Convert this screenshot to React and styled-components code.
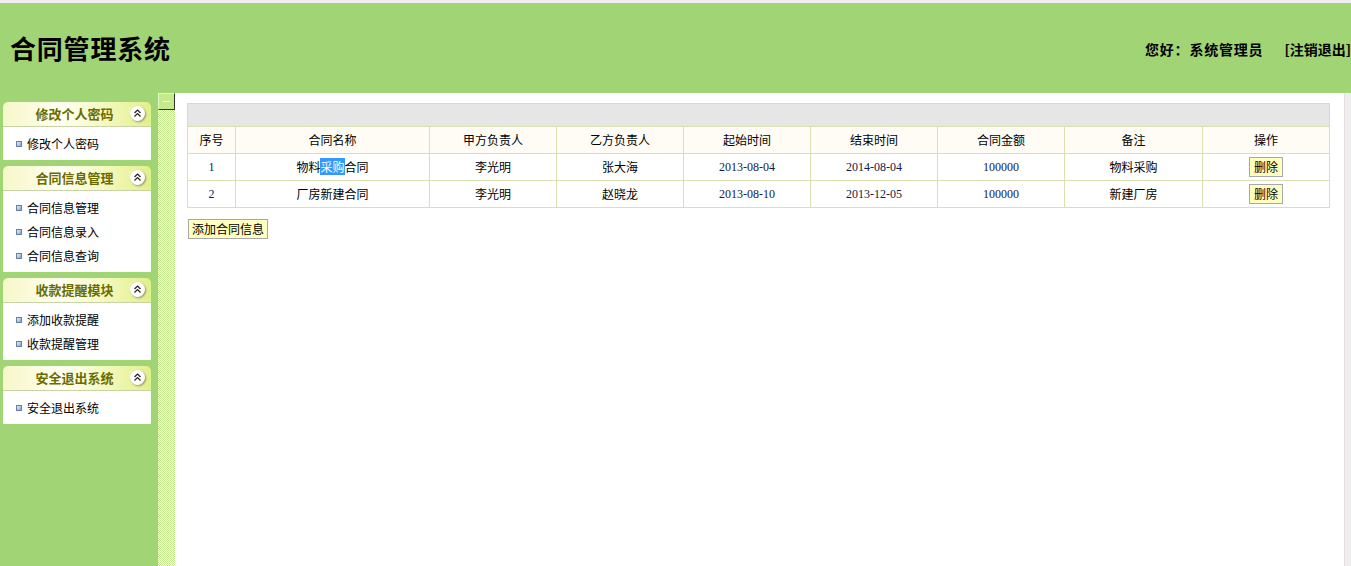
import React from 'react';
import styled, { createGlobalStyle } from 'styled-components';

const Global = createGlobalStyle`
  html, body { margin: 0; padding: 0; height: 566px; overflow: hidden; background: #fff; }
  body { font-family: "Noto Sans CJK SC", "Noto Sans", sans-serif; font-size: 12px; color: #000; }
  #root { height: 100%; }
  * { box-sizing: border-box; }
`;

const Page = styled.div`
  height: 566px;
  display: flex;
  flex-direction: column;
  border-top: 3px solid #eeeeee;
`;

const Header = styled.header`
  height: 90px;
  flex-shrink: 0;
  background: #a0d475;
  display: flex;
  align-items: center;
  justify-content: space-between;
  padding-left: 10px;
`;

const Title = styled.h1`
  margin: 0;
  font-size: 26px;
  line-height: 30px;
  font-weight: bold;
  letter-spacing: 0.8px;
  color: #000;
`;

const UserBar = styled.div`
  display: flex;
  align-items: center;
  gap: 21px;
  font-size: 14px;
  font-weight: bold;
  letter-spacing: 0.8px;
  line-height: 18px;
  padding-top: 2px;
`;

const Logout = styled.span`
  letter-spacing: 0;
  white-space: nowrap;
`;

const Body = styled.div`
  flex: 1;
  display: flex;
  min-height: 0;
`;

const Sidebar = styled.nav`
  width: 158px;
  flex-shrink: 0;
  background: #a0d475;
  padding: 9px 7px 0 3px;
`;

const Panel = styled.section`
  width: 148px;
  margin-bottom: 6px;
`;

const PanelHead = styled.div`
  position: relative;
  height: 25px;
  border-bottom: 1px solid #c9d3a8;
  border-radius: 5px 5px 0 0;
  background: linear-gradient(90deg, #f6f7c8 0%, #fffff2 40%, #f3f8bd 70%, #e2f08a 100%);
  display: flex;
  align-items: center;
  justify-content: center;
  font-size: 13px;
  font-weight: bold;
  color: #6b6c00;
  line-height: 16px;
  padding-right: 5px;
`;

const Toggle = styled.span`
  position: absolute;
  right: 6px;
  top: 4px;
  width: 15px;
  height: 15px;
  border-radius: 50%;
  background: #fff;
  box-shadow: 1px 1px 2px rgba(90, 90, 60, 0.6);
  display: flex;
  align-items: center;
  justify-content: center;
`;

const PanelBody = styled.ul`
  list-style: none;
  margin: 0;
  padding: 5px 0 4px;
  background: #fff;
`;

const Item = styled.li`
  height: 24px;
  display: flex;
  align-items: center;
  gap: 5px;
  padding-left: 13px;
  font-size: 12px;
  line-height: 14px;
  color: #000;
`;

const Bullet = styled.i`
  width: 6px;
  height: 6px;
  border: 1px solid #6c7f9a;
  background: linear-gradient(135deg, #e6f0ff, #7fa6dc);
`;

const Splitter = styled.div`
  width: 17px;
  flex-shrink: 0;
  background-color: #ffffff;
  background-image: conic-gradient(#c3ec8c 25%, #ffffff 0 50%, #c3ec8c 0 75%, #ffffff 0);
  background-size: 2px 2px;
`;

const SplitButton = styled.div`
  height: 17px;
  background: #c4ea8a;
  border-top: 1px solid #e6f8c8;
  border-left: 1px solid #e6f8c8;
  border-right: 1px solid #333;
  border-bottom: 1px solid #333;
  display: flex;
  align-items: center;
  justify-content: center;
  &::after {
    content: "";
    width: 7px;
    height: 1px;
    background: #f4fbe8;
  }
`;

const Main = styled.main`
  flex: 1;
  background: #fff;
  padding: 10px 14px 0 12px;
`;

const Scroll = styled.div`
  width: 7px;
  flex-shrink: 0;
  background: #eeeeee;
  border-left: 1px solid #e9dede;
`;

const Table = styled.table`
  width: 1142px;
  border-collapse: collapse;
  table-layout: fixed;
  font-size: 12px;
`;

const Cell = styled.td`
  border: 1px solid #d9e0b2;
  height: 27px;
  padding: 0;
  text-align: center;
  vertical-align: middle;
  line-height: 14px;
  font-family: ${p => (p.$serif ? '"Liberation Serif", "Noto Sans CJK SC", serif' : '"Noto Sans CJK SC", sans-serif')};
  color: ${p => (p.$serif ? '#14204a' : '#000')};
`;

const HeadCell = styled.th`
  border: 1px solid #d9e0b2;
  height: 27px;
  padding: 0;
  font-weight: normal;
  background: #fffcf5;
  line-height: 14px;
`;

const Bar = styled.td`
  border: 1px solid #d9e0b2;
  height: 23px;
  padding: 0;
  background: #e6e6e6;
`;

const Btn = styled.button`
  font-family: "Noto Sans CJK SC", sans-serif;
  font-size: 12px;
  line-height: 14px;
  height: 20px;
  width: ${p => p.$w}px;
  padding: 0;
  background: #ffffbf;
  border: 1px solid #a8a8a8;
  color: #000;
  cursor: pointer;
`;

const AddBtn = styled(Btn)`
  display: block;
  margin: 11px 0 0 1px;
`;

const Sel = styled.span`
  background: #3399ff;
  color: #fff;
`;

const menu = [
  { title: '修改个人密码', items: ['修改个人密码'] },
  { title: '合同信息管理', items: ['合同信息管理', '合同信息录入', '合同信息查询'] },
  { title: '收款提醒模块', items: ['添加收款提醒', '收款提醒管理'] },
  { title: '安全退出系统', items: ['安全退出系统'] },
];

const cols = [48, 194, 127, 127, 127, 127, 127, 138, 127];
const heads = ['序号', '合同名称', '甲方负责人', '乙方负责人', '起始时间', '结束时间', '合同金额', '备注', '操作'];

const rows = [
  { id: 1, name: <>物料<Sel>采购</Sel>合同</>, a: '李光明', b: '张大海', s: '2013-08-04', e: '2014-08-04', m: '100000', note: '物料采购' },
  { id: 2, name: '厂房新建合同', a: '李光明', b: '赵晓龙', s: '2013-08-10', e: '2013-12-05', m: '100000', note: '新建厂房' },
];

const Chevrons = () => (
  <svg width="9" height="9" viewBox="0 0 9 9">
    <path d="M1.5 4 L4.5 1 L7.5 4 M1.5 7.5 L4.5 4.5 L7.5 7.5" fill="none" stroke="#222" strokeWidth="1.2" />
  </svg>
);

export default function App() {
  return (
    <>
      <Global />
      <Page>
        <Header>
          <Title>合同管理系统</Title>
          <UserBar>
            <span>您好：系统管理员</span>
            <Logout>[注销退出]</Logout>
          </UserBar>
        </Header>
        <Body>
          <Sidebar>
            {menu.map(g => (
              <Panel key={g.title}>
                <PanelHead>
                  {g.title}
                  <Toggle><Chevrons /></Toggle>
                </PanelHead>
                <PanelBody>
                  {g.items.map(it => (
                    <Item key={it}><Bullet />{it}</Item>
                  ))}
                </PanelBody>
              </Panel>
            ))}
          </Sidebar>
          <Splitter><SplitButton /></Splitter>
          <Main>
            <Table>
              <colgroup>
                {cols.map((w, i) => <col key={i} style={{ width: w }} />)}
              </colgroup>
              <tbody>
                <tr><Bar colSpan={9} /></tr>
                <tr>{heads.map(h => <HeadCell key={h}>{h}</HeadCell>)}</tr>
                {rows.map(r => (
                  <tr key={r.id}>
                    <Cell $serif>{r.id}</Cell>
                    <Cell>{r.name}</Cell>
                    <Cell>{r.a}</Cell>
                    <Cell>{r.b}</Cell>
                    <Cell $serif>{r.s}</Cell>
                    <Cell $serif>{r.e}</Cell>
                    <Cell $serif>{r.m}</Cell>
                    <Cell>{r.note}</Cell>
                    <Cell><Btn $w={34}>删除</Btn></Cell>
                  </tr>
                ))}
              </tbody>
            </Table>
            <AddBtn $w={80}>添加合同信息</AddBtn>
          </Main>
          <Scroll />
        </Body>
      </Page>
    </>
  );
}
